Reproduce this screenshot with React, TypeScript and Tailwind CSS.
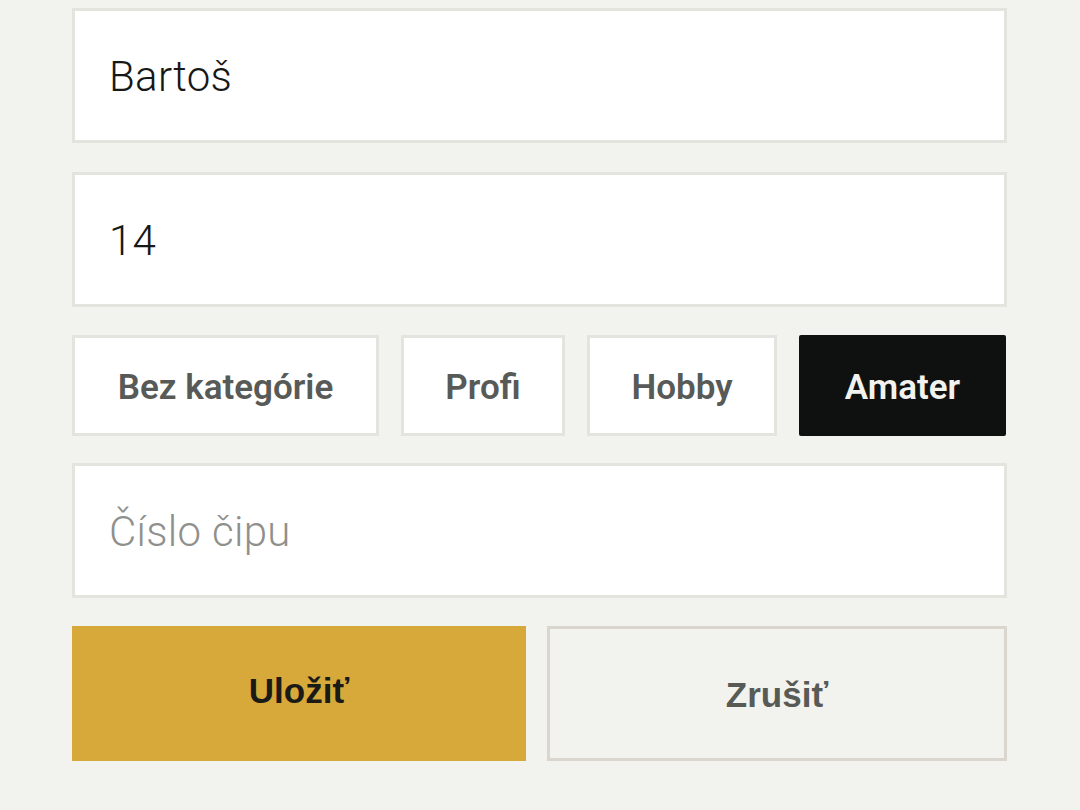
import React from 'react';

const cats = [
  { label: 'Bez kategórie', w: 'w-[307px]' },
  { label: 'Profi', w: 'w-[164px]' },
  { label: 'Hobby', w: 'w-[190px]' },
  { label: 'Amater', w: 'w-[207px]' },
];

function Field({ value, placeholder }: { value?: string; placeholder?: string }) {
  return (
    <div className="h-[135px] bg-white border-[3px] border-[#e3e4de] flex items-center pl-[34px] pt-[2px]">
      {value ? (
        <span className="text-[42px] font-light text-[#161816] tracking-[0.3px]">{value}</span>
      ) : (
        <span className="text-[42px] font-light text-[#8f908c] tracking-[0.3px]">{placeholder}</span>
      )}
    </div>
  );
}

export default function App() {
  const active = 'Amater';
  return (
    <div
      className="w-[1080px] h-[810px] bg-[#f2f2ee] overflow-hidden"
      style={{ fontFamily: 'Roboto, "Noto Sans", sans-serif' }}
    >
      <div className="ml-[72px] w-[935px] pt-[8px] flex flex-col">
        <Field value="Bartoš" />
        <div className="h-[29px]" />
        <Field value="14" />
        <div className="h-[28px]" />
        <div className="flex gap-[22px] h-[101px]">
          {cats.map((c) =>
            c.label === active ? (
              <button
                key={c.label}
                className={`${c.w} bg-[#0f1110] text-[#f2f2ee] text-[35px] font-semibold rounded-[2px] pt-[5px]`}
              >
                {c.label}
              </button>
            ) : (
              <button
                key={c.label}
                className={`${c.w} bg-white border-[3px] border-[#e3e4de] text-[#575a56] text-[35px] font-semibold pt-[5px]`}
              >
                {c.label}
              </button>
            )
          )}
        </div>
        <div className="h-[27px]" />
        <Field placeholder="Číslo čipu" />
        <div className="h-[28px]" />
        <div className="flex gap-[21px] h-[135px]" style={{ fontFamily: '"Liberation Sans", Arial, sans-serif' }}>
          <button className="w-[454px] bg-[#d7a93a] text-[#1a1a16] text-[35px] font-bold pb-[4px]">Uložiť</button>
          <button className="flex-1 border-[3px] border-[#dad6ce] bg-[#f2f2ee] text-[#585a56] text-[35px] font-bold pt-[4px]">
            Zrušiť
          </button>
        </div>
      </div>
    </div>
  );
}
